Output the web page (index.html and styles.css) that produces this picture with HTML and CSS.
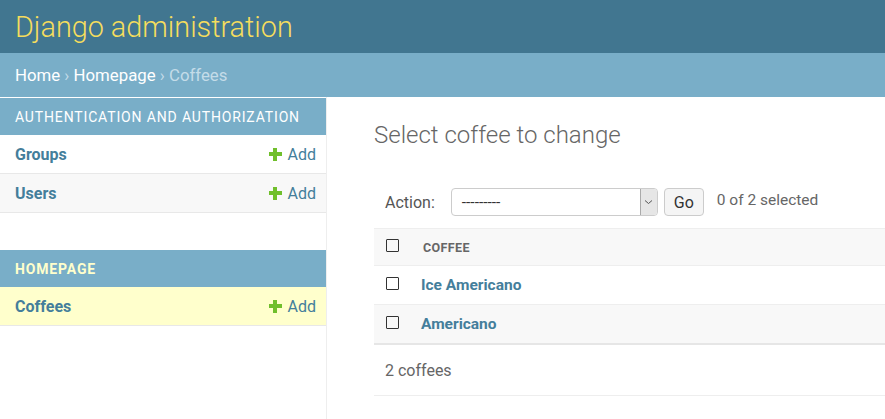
FILE: index.html
```html
<!DOCTYPE html>
<html>
<head>
<meta charset="utf-8">
<link rel="stylesheet" href="styles.css">
</head>
<body>
<div class="header"><h1 class="site-name">Django administration</h1></div>
<div class="breadcrumbs"><a class="crumb" href="#">Home</a> › <a class="crumb" href="#">Homepage</a> › <span class="crumb-current">Coffees</span></div>
<div class="main">
  <nav class="sidebar">
    <div class="module">
      <div class="caption">Authentication and Authorization</div>
      <div class="row"><a class="model" href="#">Groups</a><a class="add" href="#"><span class="plus"></span>Add</a></div>
      <div class="row alt"><a class="model" href="#">Users</a><a class="add" href="#"><span class="plus"></span>Add</a></div>
    </div>
    <div class="module">
      <div class="caption current-app">Homepage</div>
      <div class="row current"><a class="model" href="#">Coffees</a><a class="add" href="#"><span class="plus"></span>Add</a></div>
    </div>
  </nav>
  <div class="content">
    <h1 class="title">Select coffee to change</h1>
    <div class="actions">
      <label class="action-label">Action:</label>
      <div class="select"><span class="select-text">---------</span><span class="select-arrow"><svg width="9" height="6" viewBox="0 0 9 6"><path d="M1 1.5 L4.5 4.5 L8 1.5" fill="none" stroke="#555" stroke-width="1"/></svg></span></div>
      <button class="go">Go</button>
      <span class="counter">0 of 2 selected</span>
    </div>
    <div class="table">
      <div class="trow thead"><span class="cb"></span><span class="col-head">Coffee</span></div>
      <div class="trow"><span class="cb"></span><a class="item" href="#">Ice Americano</a></div>
      <div class="trow alt last"><span class="cb"></span><a class="item" href="#">Americano</a></div>
    </div>
    <div class="paginator">2 coffees</div>
  </div>
</div>
</body>
</html>
```

FILE: styles.css
```css
html, body {
  margin: 0;
  padding: 0;
  height: 100%;
}
body {
  font-family: Roboto, "Liberation Sans", sans-serif;
  color: #333;
  background: #fff;
  overflow: hidden;
}
a { text-decoration: none; }

.header {
  height: 53px;
  background: #417690;
  display: flex;
  align-items: center;
  padding: 0 15px;
  box-sizing: border-box;
}
.site-name {
  margin: 0;
  font-size: 28.8px;
  font-weight: 300;
  color: #f5dd5d;
}

.breadcrumbs {
  height: 44px;
  background: #79aec8;
  display: flex;
  align-items: center;
  padding: 0 15px;
  box-sizing: border-box;
  color: #c4dce8;
  font-size: 16.8px;
  white-space: pre;
}
.crumb { color: #fff; }
.crumb-current { color: #c4dce8; }

.main {
  display: flex;
  height: calc(100% - 97px);
}
.sidebar {
  width: 326px;
  flex: none;
  border-right: 1px solid #eee;
  padding-top: 1px;
}
.module { margin-bottom: 37px; }
.caption {
  height: 37px;
  background: #79aec8;
  color: #fff;
  font-size: 14px;
  letter-spacing: 0.85px;
  text-transform: uppercase;
  display: flex;
  align-items: center;
  padding: 0 15px;
}
.caption.current-app {
  color: #ffc;
  font-weight: 700;
}
.row {
  height: 38px;
  border-bottom: 1px solid #e8e8e8;
  display: flex;
  align-items: center;
  justify-content: space-between;
  padding: 0 10px 0 15px;
  font-size: 16px;
}
.row.alt { background: #f8f8f8; }
.row.current { background: #ffc; }
.model { color: #447e9b; font-weight: 700; }
.add { color: #447e9b; display: flex; align-items: center; }
.plus {
  width: 13px;
  height: 13px;
  margin-right: 6px;
  background:
    linear-gradient(#70bf2b, #70bf2b) center / 13px 4px no-repeat,
    linear-gradient(#70bf2b, #70bf2b) center / 4px 13px no-repeat;
}

.content {
  flex: 1;
  padding-left: 47px;
  min-width: 0;
}
.title {
  margin: 24px 0 0;
  font-size: 24px;
  font-weight: 300;
  color: #666;
  height: 28px;
  line-height: 28px;
}
.actions {
  margin-top: 39px;
  margin-bottom: 12px;
  display: flex;
  align-items: center;
  padding: 0 0 0 11px;
  height: 28px;
  font-size: 16px;
  color: #666;
}
.action-label { margin-right: 16px; color: #555; }
.select {
  width: 205px;
  height: 26px;
  border: 1px solid #ccc;
  border-radius: 4px;
  display: flex;
  align-items: center;
  justify-content: space-between;
  overflow: hidden;
}
.select-text { padding-left: 10px; font-size: 15.5px; color: #333; }
.select-arrow {
  width: 16px;
  height: 26px;
  background: #e6e6e6;
  border-left: 1px solid #aaa;
  display: flex;
  align-items: center;
  justify-content: center;
}
.go {
  margin-left: 6px;
  width: 40px;
  height: 28px;
  border: 1px solid #ccc;
  border-radius: 4px;
  background: #f5f5f5;
  font-family: inherit;
  font-size: 16px;
  color: #333;
  padding: 0;
}
.counter { margin-left: 13px; color: #666; font-size: 15.5px; position: relative; top: -2px; }

.table { border-top: 1px solid #eee; }
.trow {
  height: 38px;
  border-bottom: 1px solid #eee;
  display: flex;
  align-items: center;
  padding-left: 12px;
}
.trow.thead { height: 36px; background: #f8f8f8; }
.trow.alt { background: #f8f8f8; }
.trow.last { border-bottom: 2px solid #e6e6e6; }
.cb {
  width: 11px;
  height: 11px;
  border: 1px solid #333;
  border-radius: 1px;
  flex: none;
  margin-right: 22px;
  position: relative;
  top: -2px;
}
.col-head {
  font-size: 12.5px;
  font-weight: 700;
  color: #666;
  text-transform: uppercase;
  letter-spacing: 0.4px;
  margin-left: 2px;
}
.item { color: #447e9b; font-weight: 700; font-size: 15.5px; }
.paginator {
  height: 50px;
  border-bottom: 1px solid #eee;
  display: flex;
  align-items: center;
  padding-left: 11px;
  font-size: 16px;
  color: #666;
}
```
